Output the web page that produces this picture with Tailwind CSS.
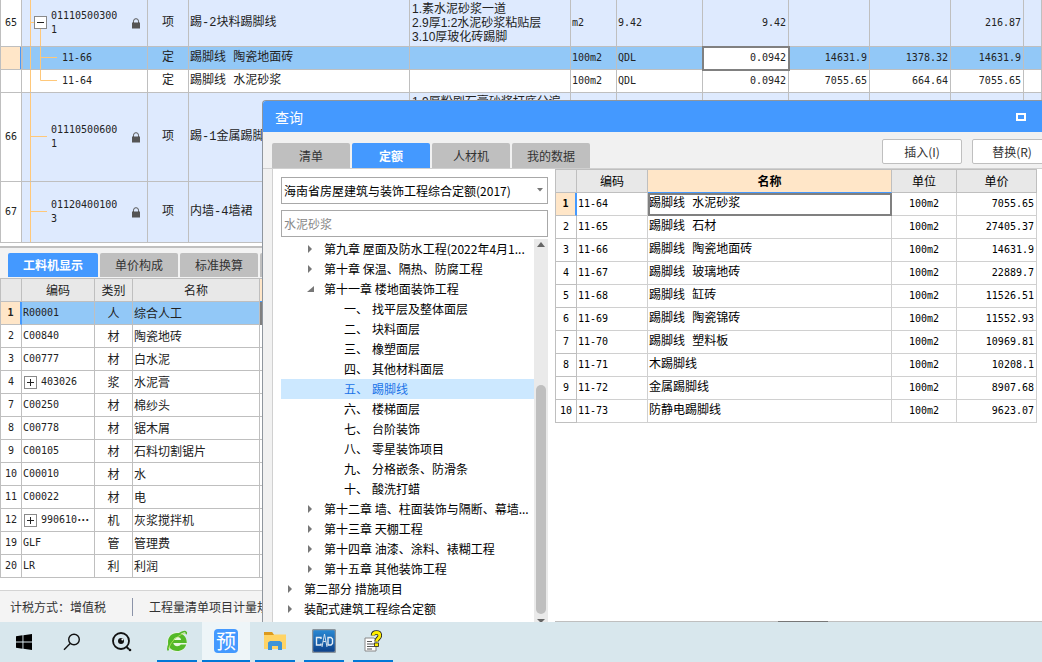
<!DOCTYPE html>
<html lang="zh-CN">
<head>
<meta charset="utf-8">
<title>查询</title>
<script src="https://cdn.jsdelivr.net/npm/@tailwindcss/browser@4"></script>
</head>
<body class="relative flex h-screen flex-col overflow-hidden bg-white font-['Noto_Sans_CJK_SC',sans-serif] text-xs text-[#222]">

<!-- Bill of quantities -->
<main class="flex min-h-0 flex-1 flex-col">
<div class="h-[246px] shrink-0 overflow-hidden">
<table class="w-full table-fixed border-separate border-spacing-0 border-l border-[#bfbfbf] leading-[14px] font-['Liberation_Mono','Noto_Sans_CJK_SC',monospace] [&_td]:border-r [&_td]:border-b [&_td]:border-[#bfbfbf] [&_td]:p-0">
<colgroup><col class="w-[21px]"><col class="w-[126px]"><col class="w-[41px]"><col class="w-[221px]"><col class="w-[161px]"><col class="w-[46px]"><col class="w-[86px]"><col class="w-[86px]"><col class="w-[81px]"><col class="w-[81px]"><col class="w-[73px]"><col></colgroup>
<tbody>
<tr class="h-[47px] bg-[#deeafe]">
<td class="bg-white text-center font-['DejaVu_Sans_Mono',monospace] text-[10px]">65</td>
<td><div class="flex items-center"><svg class="block shrink-0" width="29" height="46" fill="none"><path d="M8.5 0V46M9 22.5H12M18.5 29V46" stroke="#ffc87a"/><rect x="12.5" y="16.5" width="12" height="12" fill="#fff" stroke="#8a8a8a"/><path d="M15 22.5h7" stroke="#222"/></svg><span class="w-20 font-['DejaVu_Sans_Mono',monospace] text-[10px]">01110500300<br>1</span><svg class="block" width="10" height="11" viewBox="0 0 10 11"><path d="M2.5 5V3.2a2.5 2.5 0 0 1 5 0V5" fill="none" stroke="#555"/><rect x="1" y="4.5" width="8" height="6" fill="#555"/></svg></div></td>
<td class="text-center">项</td><td><span class="pl-px">踢-2块料踢脚线</span></td>
<td><div class="pl-0.5 font-['Liberation_Sans','Noto_Sans_CJK_SC',sans-serif]">1.素水泥砂浆一道<br>2.9厚1:2水泥砂浆粘贴层<br>3.10厚玻化砖踢脚</div></td>
<td class="font-['DejaVu_Sans_Mono',monospace] text-[10px]"><span class="pl-px">m2</span></td><td class="font-['DejaVu_Sans_Mono',monospace] text-[10px]"><span class="pl-px">9.42</span></td><td class="text-right font-['DejaVu_Sans_Mono',monospace] text-[10px]"><span class="pr-0.5">9.42</span></td><td></td><td></td><td class="text-right font-['DejaVu_Sans_Mono',monospace] text-[10px]"><span class="pr-0.5">216.87</span></td><td></td>
</tr>
<tr class="h-[23px] bg-[#92c8f7]">
<td class="bg-[#ffe6c8]"><div class="ml-auto h-[22px] w-px bg-[#4499ff]"></div></td>
<td class="border-l border-l-[#4499ff]"><div class="flex items-center"><svg class="block shrink-0" width="39" height="22" fill="none"><path d="M7.5 0V22M17.5 0V22M18 10.5H34" stroke="#ffc87a"/></svg><span class="font-['DejaVu_Sans_Mono',monospace] text-[10px]">11-66</span></div></td>
<td class="text-center">定</td><td><span class="pl-px">踢脚线 陶瓷地面砖</span></td><td></td>
<td class="font-['DejaVu_Sans_Mono',monospace] text-[10px]"><span class="pl-px">100m2</span></td><td class="font-['DejaVu_Sans_Mono',monospace] text-[10px]"><span class="pl-px">QDL</span></td>
<td class="bg-white text-right font-['DejaVu_Sans_Mono',monospace] text-[10px] outline-2 -outline-offset-1 outline-[#808080]"><span class="pr-0.5">0.0942</span></td>
<td class="text-right font-['DejaVu_Sans_Mono',monospace] text-[10px]"><span class="pr-0.5">14631.9</span></td><td class="text-right font-['DejaVu_Sans_Mono',monospace] text-[10px]"><span class="pr-0.5">1378.32</span></td><td class="text-right font-['DejaVu_Sans_Mono',monospace] text-[10px]"><span class="pr-0.5">14631.9</span></td><td></td>
</tr>
<tr class="h-[23px] bg-white">
<td></td>
<td><div class="flex items-center"><svg class="block shrink-0" width="40" height="22" fill="none"><path d="M8.5 0V22M18.5 0V10.5H35" stroke="#ffc87a"/></svg><span class="font-['DejaVu_Sans_Mono',monospace] text-[10px]">11-64</span></div></td>
<td class="text-center">定</td><td><span class="pl-px">踢脚线 水泥砂浆</span></td><td></td>
<td class="font-['DejaVu_Sans_Mono',monospace] text-[10px]"><span class="pl-px">100m2</span></td><td class="font-['DejaVu_Sans_Mono',monospace] text-[10px]"><span class="pl-px">QDL</span></td>
<td class="text-right font-['DejaVu_Sans_Mono',monospace] text-[10px]"><span class="pr-0.5">0.0942</span></td><td class="text-right font-['DejaVu_Sans_Mono',monospace] text-[10px]"><span class="pr-0.5">7055.65</span></td><td class="text-right font-['DejaVu_Sans_Mono',monospace] text-[10px]"><span class="pr-0.5">664.64</span></td><td class="text-right font-['DejaVu_Sans_Mono',monospace] text-[10px]"><span class="pr-0.5">7055.65</span></td><td></td>
</tr>
<tr class="h-[89px] bg-[#deeafe]">
<td class="bg-white text-center font-['DejaVu_Sans_Mono',monospace] text-[10px]">66</td>
<td><div class="flex items-center"><svg class="block shrink-0" width="29" height="88" fill="none"><path d="M8.5 0V88M9 43.5H25" stroke="#ffc87a"/></svg><span class="w-20 font-['DejaVu_Sans_Mono',monospace] text-[10px]">01110500600<br>1</span><svg class="block" width="10" height="11" viewBox="0 0 10 11"><path d="M2.5 5V3.2a2.5 2.5 0 0 1 5 0V5" fill="none" stroke="#555"/><rect x="1" y="4.5" width="8" height="6" fill="#555"/></svg></div></td>
<td class="text-center">项</td><td><span class="pl-px">踢-1金属踢脚线</span></td>
<td class="align-top"><div class="pt-0.5 pl-0.5 font-['Liberation_Sans','Noto_Sans_CJK_SC',sans-serif]">1.9厚粉刷石膏砂浆打底分遍</div></td>
<td></td><td></td><td></td><td></td><td></td><td></td><td></td>
</tr>
<tr class="h-[61px] bg-[#deeafe]">
<td class="bg-white text-center font-['DejaVu_Sans_Mono',monospace] text-[10px]">67</td>
<td><div class="flex items-center"><svg class="block shrink-0" width="29" height="60" fill="none"><path d="M8.5 0V60M9 29.5H25" stroke="#ffc87a"/></svg><span class="w-20 font-['DejaVu_Sans_Mono',monospace] text-[10px]">01120400100<br>3</span><svg class="block" width="10" height="11" viewBox="0 0 10 11"><path d="M2.5 5V3.2a2.5 2.5 0 0 1 5 0V5" fill="none" stroke="#555"/><rect x="1" y="4.5" width="8" height="6" fill="#555"/></svg></div></td>
<td class="text-center">项</td><td><span class="pl-px">内墙-4墙裙</span></td><td></td><td></td><td></td><td></td><td></td><td></td><td></td><td></td>
</tr>
</tbody>
</table>
</div>

<!-- Resource breakdown -->
<section class="flex min-h-0 flex-1 flex-col border-t-2 border-[#c0c0c0] bg-white">
<nav class="flex h-[30px] gap-0.5 bg-[#f3f3f3] pt-[5px] pl-2 text-[#333] [&>button]:h-6 [&>button]:rounded-t-xs [&>button]:bg-[#bfbfbf]">
<button class="w-[90px] bg-[#4499ff]! font-bold text-white">工料机显示</button><button class="w-[78px]">单价构成</button><button class="w-[78px]">标准换算</button><button class="w-[78px]" aria-label="更多"></button>
</nav>
<table class="w-[440px] table-fixed border-separate border-spacing-0 border-t border-l border-[#bfbfbf] leading-[14px] [&_td]:border-r [&_td]:border-b [&_td]:border-[#bfbfbf] [&_td]:p-0 [&_td:nth-child(1)]:text-center [&_td:nth-child(1)]:font-['DejaVu_Sans_Mono',monospace] [&_td:nth-child(1)]:text-[10px] [&_td:nth-child(2)]:pl-px [&_td:nth-child(2)]:font-['DejaVu_Sans_Mono',monospace] [&_td:nth-child(2)]:text-[10px] [&_td:nth-child(3)]:text-center [&_td:nth-child(4)]:pl-px [&_th]:border-r [&_th]:border-b [&_th]:border-[#bfbfbf] [&_th]:bg-[#e8e8e8] [&_th]:p-0 [&_th]:font-normal [&_tr]:h-[23px]">
<colgroup><col class="w-[21px]"><col class="w-[73px]"><col class="w-[38px]"><col class="w-[127px]"><col></colgroup>
<thead><tr><th></th><th>编码</th><th>类别</th><th>名称</th><th class="bg-[#ffe6c8]! border-b-[#4499ff]!"></th></tr></thead>
<tbody>
<tr class="bg-[#92c8f7]"><td class="border-r-2! border-r-[#4499ff]! bg-[#ffe6c8] font-bold">1</td><td>R00001</td><td>人</td><td>综合人工</td><td class="border-2! border-[#808080]! bg-white"></td></tr>
<tr><td>2</td><td>C00840</td><td>材</td><td>陶瓷地砖</td><td></td></tr>
<tr><td>3</td><td>C00777</td><td>材</td><td>白水泥</td><td></td></tr>
<tr><td>4</td><td><div class="flex items-center gap-1"><svg class="shrink-0" width="14" height="14" fill="none"><rect x="1.5" y="1.5" width="12" height="12" stroke="#8a8a8a"/><path d="M4 7.5h7M7.5 4v7" stroke="#222"/></svg>403026</div></td><td>浆</td><td>水泥膏</td><td></td></tr>
<tr><td>7</td><td>C00250</td><td>材</td><td>棉纱头</td><td></td></tr>
<tr><td>8</td><td>C00778</td><td>材</td><td>锯木屑</td><td></td></tr>
<tr><td>9</td><td>C00105</td><td>材</td><td>石料切割锯片</td><td></td></tr>
<tr><td>10</td><td>C00010</td><td>材</td><td>水</td><td></td></tr>
<tr><td>11</td><td>C00022</td><td>材</td><td>电</td><td></td></tr>
<tr><td>12</td><td><div class="flex items-center"><svg class="mr-1 shrink-0" width="14" height="14" fill="none"><rect x="1.5" y="1.5" width="12" height="12" stroke="#8a8a8a"/><path d="M4 7.5h7M7.5 4v7" stroke="#222"/></svg><span>990610</span><span class="font-['Noto_Sans_CJK_SC'] text-xs leading-[14px] font-bold">⋯</span></div></td><td>机</td><td>灰浆搅拌机</td><td></td></tr>
<tr><td>19</td><td>GLF</td><td>管</td><td>管理费</td><td></td></tr>
<tr><td>20</td><td>LR</td><td>利</td><td>利润</td><td></td></tr>
</tbody>
</table>
</section>

<footer class="flex h-8 shrink-0 items-center border-t border-[#d4d4d4] bg-[#f4f4f4] pl-2.5 text-[#333]"><span>计税方式：增值税</span><span class="mx-4 ml-[26px] h-[18px] w-px bg-[#8b93a8]"></span><span>工程量清单项目计量规范</span></footer>
</main>

<!-- Taskbar -->
<div class="flex h-10 shrink-0 bg-[#d8e7ed] [&>button]:flex [&>button]:items-center [&>button]:justify-center">
<button class="w-12" aria-label="开始"><svg width="16" height="16" viewBox="0 0 16 16"><path d="M0 2.2 6.5 1.3V7.5H0zM7.4 1.2 16 0V7.5H7.4zM0 8.5H6.5V14.7L0 13.8zM7.4 8.5H16V16L7.4 14.8z"/></svg></button>
<button class="w-12" aria-label="搜索"><svg width="18" height="18" viewBox="0 0 18 18" fill="none" stroke="#111" stroke-width="1.4"><circle cx="11" cy="6.5" r="5.3"/><path d="M7.2 10.5 1 16.7"/></svg></button>
<button class="w-[52px]" aria-label="查看"><svg width="20" height="20" viewBox="0 0 20 20" fill="none"><circle cx="9" cy="9" r="8" stroke="#111" stroke-width="1.8"/><circle cx="9" cy="9" r="3" fill="#111"/><circle cx="10.4" cy="7.6" r="1" fill="#fff"/><path d="M14.5 15 17 17.2" stroke="#111" stroke-width="2"/><circle cx="18" cy="18" r="1.3" fill="#111"/></svg></button>
<button class="ml-[9px] w-10 border-b-2 border-[#0078d7]" aria-label="浏览器"><svg width="24" height="24" viewBox="0 0 24 24" fill="none"><circle cx="12" cy="13" r="10" fill="#e9f6e2"/><path d="M21.8 14H8.3c.3 2 1.800 3.200 3.900 3.200 1.600 0 2.800-.6 3.600-1.700h5.400C20 19.700 16.600 22 12.200 22 6.500 22 3 18.200 3 13c0-5.100 3.700-9 9.100-9 5.900 0 9.700 3.800 9.700 10zM8.400 11h7.700c-.3-1.800-1.700-2.900-3.800-2.900-2 0-3.500 1.100-3.900 2.900z" fill="#54b928"/><path d="M3.200 21.500C1.500 17 8 7 17 3.200c3-1.200 5-.8 4.200 2" stroke="#54b928" stroke-width="1.600"/><path d="M4 20C4 15 11 7 20 4" stroke="#b9e55c" stroke-width=".8"/></svg></button>
<button class="ml-[5px] w-12 border-b-2 border-[#0078d7] bg-[#eef5f8]" aria-label="预算"><span class="flex size-6 items-center justify-center rounded bg-[#4499ff] text-xl leading-6 text-white">预</span></button>
<button class="ml-[5px] w-10 border-b-2 border-[#0078d7]" aria-label="文件夹"><svg width="22" height="20" viewBox="0 0 22 20"><path d="M0 1h8l2 2.500h12V18H0z" fill="#ffd465"/><path d="M0 1h8l2 3H0z" fill="#dc9a1d"/><path d="M4 19v-7.500L6 10h10l2 1.500V19h-4v-4H8v4z" fill="#3d94d9"/></svg></button>
<button class="ml-[9px] w-10 border-b-2 border-[#0078d7]" aria-label="CAD"><svg width="24" height="24" viewBox="0 0 24 24"><defs><linearGradient id="c" x2="0" y2="1"><stop stop-color="#2a8bd6"/><stop offset="1" stop-color="#0c3f88"/></linearGradient></defs><rect x=".5" y=".5" width="23" height="23" rx="2" fill="url(#c)" stroke="#8a949c" stroke-width="1.500"/><path d="M9 10V8.500H4.500v7.500H9v-1.500M16 8.500v7.500h3l1.500-1.500v-4.500L19 8.500z" fill="none" stroke="#e4edf5" stroke-width="1.400"/><path d="M12.500 5 10 18M12.500 5 15 18M11 12.500h3" fill="none" stroke="#cfe0ee"/></svg></button>
<button class="ml-[9px] w-10 border-b-2 border-[#0078d7]" aria-label="帮助"><svg width="18" height="22" viewBox="0 0 18 22"><path d="M1 8h9l2 2v11H1z" fill="#fff" stroke="#888"/><path d="M3 11.500h5M3 14h7M3 16.500h7M3 19h5" stroke="#555"/><path d="M9 5.500C9 3 10.500 2.500 12.500 2.500s3.300 1 3.300 3c0 3-3.300 3-3.300 6" fill="none" stroke="#222" stroke-width="4.500"/><path d="M9 5.500C9 3 10.500 2.500 12.500 2.500s3.300 1 3.300 3c0 3-3.300 3-3.300 6" fill="none" stroke="#ffee00" stroke-width="2.800"/><rect x="10.500" y="13" width="4" height="3.500" fill="#ffee00" stroke="#222" stroke-width=".8"/></svg></button>
</div>

<!-- Query window floating over the workspace -->
<div role="dialog" aria-label="查询" class="absolute top-[100px] right-0 bottom-10 left-[262px] flex flex-col overflow-hidden rounded-tl border-t border-l border-[#8f969e] bg-[#f1f1f1]">
<header class="flex h-[31px] shrink-0 items-center justify-between bg-[#4499ff] pr-4 pl-3 text-sm text-white"><h1>查询</h1><button aria-label="最大化" class="h-2 w-2.5 border-2 border-white"></button></header>
<div class="flex h-[37px] shrink-0 items-end justify-between border-b border-[#d0d0d0] pl-[9px]">
<nav class="flex gap-0.5 text-[#333] [&>button]:h-[25px] [&>button]:w-[78px] [&>button]:rounded-t-xs [&>button]:bg-[#bfbfbf]"><button>清单</button><button class="bg-[#4499ff]! font-bold text-white">定额</button><button>人材机</button><button>我的数据</button></nav>
<div class="-mr-2.5 mb-1 flex gap-2.5 text-[#333] [&>button]:h-[25px] [&>button]:w-20 [&>button]:rounded-xs [&>button]:border [&>button]:border-[#bfbfbf] [&>button]:bg-white"><button>插入(I)</button><button>替换(R)</button></div>
</div>
<div class="flex min-h-0 flex-1 pl-[9px]">
<aside class="flex w-[283px] shrink-0 flex-col border-l border-[#d0d0d0] bg-white pt-2 pr-[7px] pl-2 text-black">
<div class="relative">
<select aria-label="定额库" class="block h-[27px] w-full appearance-none border border-[#a8a8a8] bg-white px-0.5"><option>海南省房屋建筑与装饰工程综合定额(2017)</option></select>
<svg class="pointer-events-none absolute top-[11px] right-[5px]" width="6" height="4"><path d="M0 0h6L3 3.500z" fill="#777"/></svg>
</div>
<input aria-label="搜索定额" placeholder="水泥砂浆" class="mt-1.5 h-[27px] w-full shrink-0 border border-[#a8a8a8] px-0.5 placeholder:text-[#888]">
<div class="mt-0.5 flex min-h-0 flex-1">
<ul class="min-w-0 flex-1 [&>li]:flex [&>li]:h-5 [&>li]:items-center [&>li]:overflow-hidden [&>li]:whitespace-nowrap [&_svg]:mr-[10px] [&_svg]:shrink-0">
<li class="pl-[26px]"><svg width="7" height="8"><path d="M1 0v8l4-4z" fill="#777"/></svg>第九章 屋面及防水工程(2022年4月1...</li>
<li class="pl-[26px]"><svg width="7" height="8"><path d="M1 0v8l4-4z" fill="#777"/></svg>第十章 保温、隔热、防腐工程</li>
<li class="pl-[26px]"><svg width="7" height="8"><path d="M7 1v6H0z" fill="#777"/></svg>第十一章 楼地面装饰工程</li>
<li class="gap-1 pl-[63px]"><span>一、</span><span>找平层及整体面层</span></li>
<li class="gap-1 pl-[63px]"><span>二、</span><span>块料面层</span></li>
<li class="gap-1 pl-[63px]"><span>三、</span><span>橡塑面层</span></li>
<li class="gap-1 pl-[63px]"><span>四、</span><span>其他材料面层</span></li>
<li class="gap-1 bg-[#cce8ff] pl-[63px] text-[#1a73e8]"><span>五、</span><span>踢脚线</span></li>
<li class="gap-1 pl-[63px]"><span>六、</span><span>楼梯面层</span></li>
<li class="gap-1 pl-[63px]"><span>七、</span><span>台阶装饰</span></li>
<li class="gap-1 pl-[63px]"><span>八、</span><span>零星装饰项目</span></li>
<li class="gap-1 pl-[63px]"><span>九、</span><span>分格嵌条、防滑条</span></li>
<li class="gap-1 pl-[63px]"><span>十、</span><span>酸洗打蜡</span></li>
<li class="pl-[26px]"><svg width="7" height="8"><path d="M1 0v8l4-4z" fill="#777"/></svg>第十二章 墙、柱面装饰与隔断、幕墙...</li>
<li class="pl-[26px]"><svg width="7" height="8"><path d="M1 0v8l4-4z" fill="#777"/></svg>第十三章 天棚工程</li>
<li class="pl-[26px]"><svg width="7" height="8"><path d="M1 0v8l4-4z" fill="#777"/></svg>第十四章 油漆、涂料、裱糊工程</li>
<li class="pl-[26px]"><svg width="7" height="8"><path d="M1 0v8l4-4z" fill="#777"/></svg>第十五章 其他装饰工程</li>
<li class="pl-1.5"><svg width="7" height="8"><path d="M1 0v8l4-4z" fill="#777"/></svg>第二部分 措施项目</li>
<li class="pl-1.5"><svg width="7" height="8"><path d="M1 0v8l4-4z" fill="#777"/></svg>装配式建筑工程综合定额</li>
</ul>
<div class="flex w-3.5 flex-col items-center justify-between bg-[#eaeaea] pt-[3px]"><svg width="8" height="5"><path d="M0 5 4 0l4 5z" fill="#666"/></svg><div class="mt-auto mb-[5px] h-[229px] w-2.5 rounded-full bg-[#bfbfbf]"></div><svg class="shrink-0" width="8" height="3"><path d="M0 0h8L5 3H3z" fill="#666"/></svg></div>
</div>
</aside>
<div class="flex min-w-0 flex-1 flex-col justify-between border-b border-[#bfbfbf] bg-white">
<table class="w-[482px] table-fixed border-separate border-spacing-0 border-l border-[#bfbfbf] leading-[14px] text-black [&_td]:border-r [&_td]:border-b [&_td]:border-[#d0d0d0] [&_td]:p-0 [&_td:nth-child(1)]:border-[#bfbfbf] [&_td:nth-child(1)]:text-center [&_td:nth-child(1)]:font-['DejaVu_Sans_Mono',monospace] [&_td:nth-child(1)]:text-[10px] [&_td:nth-child(2)]:pl-px [&_td:nth-child(2)]:font-['DejaVu_Sans_Mono',monospace] [&_td:nth-child(2)]:text-[10px] [&_td:nth-child(3)]:pl-px [&_td:nth-child(3)]:font-['Liberation_Mono','Noto_Sans_CJK_SC',monospace] [&_td:nth-child(4)]:text-center [&_td:nth-child(4)]:font-['DejaVu_Sans_Mono',monospace] [&_td:nth-child(4)]:text-[10px] [&_td:nth-child(5)]:pr-0.5 [&_td:nth-child(5)]:text-right [&_td:nth-child(5)]:font-['DejaVu_Sans_Mono',monospace] [&_td:nth-child(5)]:text-[10px] [&_th]:border-r [&_th]:border-b [&_th]:border-[#bfbfbf] [&_th]:bg-[#e8e8e8] [&_th]:p-0 [&_th]:font-normal [&_tr]:h-[23px]">
<colgroup><col class="w-[21px]"><col class="w-[71px]"><col class="w-[244px]"><col class="w-[65px]"><col class="w-20"></colgroup>
<thead><tr class="h-6!"><th class="border-t"></th><th class="border-t">编码</th><th class="border-t border-b-[#4499ff]! bg-[#ffe6c8]! font-bold!">名称</th><th class="border-t">单位</th><th class="border-t">单价</th></tr></thead>
<tbody>
<tr><td class="border-r-2! border-r-[#4499ff]! bg-[#ffe6c8] font-bold">1</td><td>11-64</td><td class="outline-2 -outline-offset-2 outline-[#808080]">踢脚线 水泥砂浆</td><td>100m2</td><td>7055.65</td></tr>
<tr><td>2</td><td>11-65</td><td>踢脚线 石材</td><td>100m2</td><td>27405.37</td></tr>
<tr><td>3</td><td>11-66</td><td>踢脚线 陶瓷地面砖</td><td>100m2</td><td>14631.9</td></tr>
<tr><td>4</td><td>11-67</td><td>踢脚线 玻璃地砖</td><td>100m2</td><td>22889.7</td></tr>
<tr><td>5</td><td>11-68</td><td>踢脚线 缸砖</td><td>100m2</td><td>11526.51</td></tr>
<tr><td>6</td><td>11-69</td><td>踢脚线 陶瓷锦砖</td><td>100m2</td><td>11552.93</td></tr>
<tr><td>7</td><td>11-70</td><td>踢脚线 塑料板</td><td>100m2</td><td>10969.81</td></tr>
<tr><td>8</td><td>11-71</td><td>木踢脚线</td><td>100m2</td><td>10208.1</td></tr>
<tr><td>9</td><td>11-72</td><td>金属踢脚线</td><td>100m2</td><td>8907.68</td></tr>
<tr><td>10</td><td>11-73</td><td>防静电踢脚线</td><td>100m2</td><td>9623.07</td></tr>
</tbody>
</table>
<div class="-mb-px ml-[223px] h-px w-[50px] bg-[#777]"></div>
</div>
</div>
</div>
</body>
</html>
